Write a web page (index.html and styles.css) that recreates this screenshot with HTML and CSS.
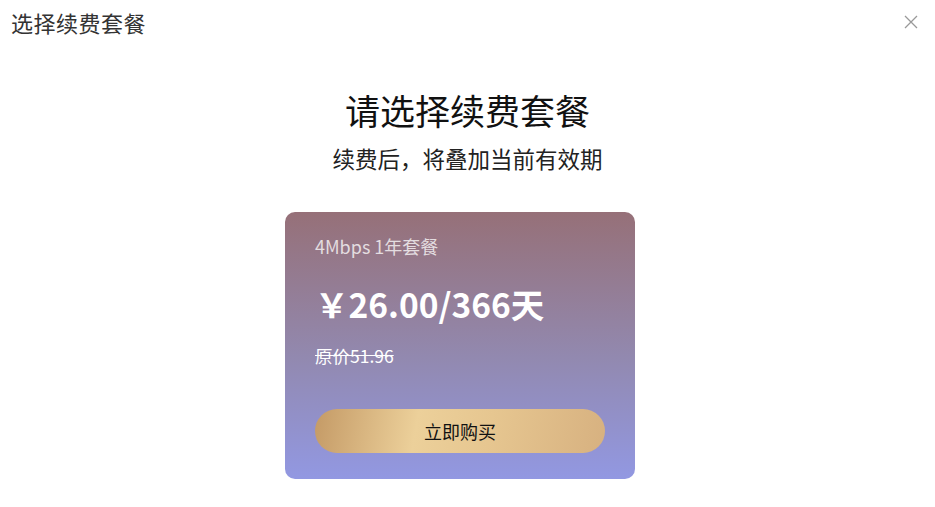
FILE: index.html
```html
<!DOCTYPE html>
<html lang="zh">
<head>
<meta charset="utf-8">
<link rel="stylesheet" href="styles.css">
</head>
<body>
<div class="dialog">
  <div class="header">
    <div class="title">选择续费套餐</div>
    <svg class="close" width="14" height="14" viewBox="0 0 14 14"><path d="M1 1L13 13M13 1L1 13" stroke="#999" stroke-width="1.3" fill="none"/></svg>
  </div>
  <div class="body">
    <h1 class="heading">请选择续费套餐</h1>
    <p class="sub">续费后，将叠加当前有效期</p>
    <div class="card">
      <div class="plan">4Mbps 1年套餐</div>
      <div class="price">￥26.00/366天</div>
      <div class="orig">原价51.96</div>
      <button class="buy">立即购买</button>
    </div>
  </div>
</div>
</body>
</html>
```
FILE: styles.css
```css
* { box-sizing: border-box; }
html, body { margin: 0; padding: 0; background: #fff; }
body {
  font-family: "Microsoft YaHei", "Noto Sans CJK SC", "Noto Sans", sans-serif;
  width: 935px;
  height: 507px;
  overflow: hidden;
}
.header {
  display: flex;
  justify-content: space-between;
  align-items: center;
  height: 44px;
  padding: 0 17px 0 11px;
}
.title {
  font-size: 22px;
  color: #333;
  letter-spacing: 0.5px;
}
.close { display: block; }
.body {
  display: flex;
  flex-direction: column;
  align-items: center;
}
.heading {
  margin: 42px 0 0;
  font-size: 35px;
  font-weight: normal;
  line-height: 48px;
  color: #111;
}
.sub {
  margin: 9px 0 0;
  font-size: 22.5px;
  line-height: 30px;
  color: #222;
}
.card {
  margin-top: 39px;
  margin-right: 15px;
  width: 350px;
  height: 267px;
  border-radius: 10px;
  background: linear-gradient(180deg, #967078 0%, #9289b0 55%, #9298e2 100%);
  padding: 21px 30px 0;
  display: flex;
  flex-direction: column;
}
.plan {
  font-size: 18px;
  line-height: 26px;
  color: rgba(255,255,255,0.75);
}
.price {
  margin-top: 24px;
  font-size: 33.5px;
  font-weight: bold;
  line-height: 42px;
  color: #fff;
}
.orig {
  margin-top: 19px;
  font-size: 17.5px;
  line-height: 24px;
  color: #fff;
  text-decoration: line-through;
}
.buy {
  margin-top: 41px;
  width: 290px;
  height: 44px;
  border: none;
  border-radius: 22px;
  background: linear-gradient(100deg, #c49a66 0%, #ecd09a 35%, #e6c690 60%, #d7b180 100%);
  font-family: inherit;
  font-size: 18px;
  color: #111;
  cursor: pointer;
}
```
